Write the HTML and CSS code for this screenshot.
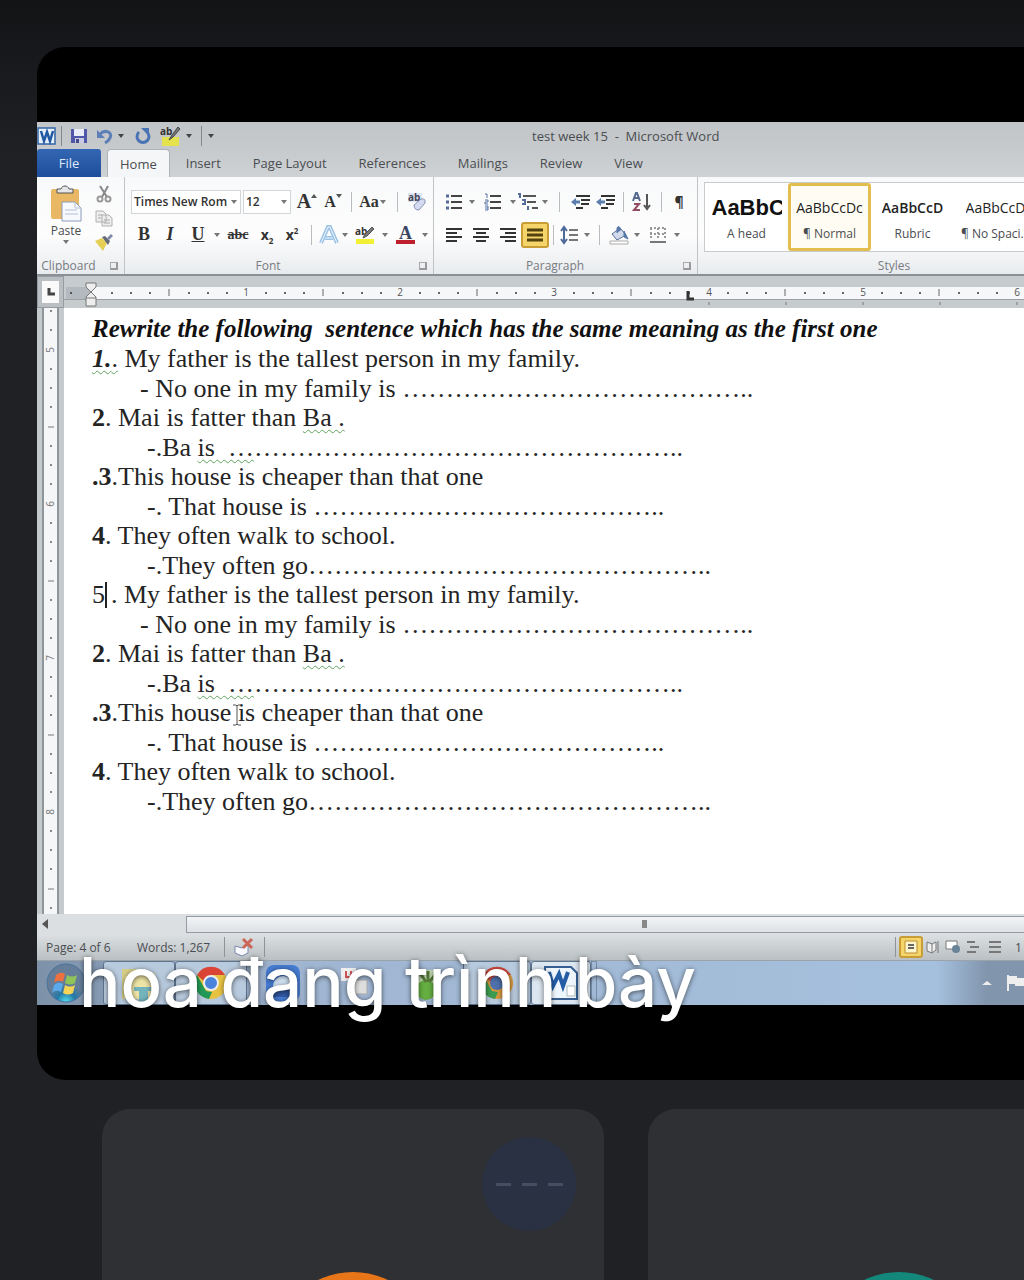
FILE: index.html
```html
<!DOCTYPE html>
<html lang="vi">
<head>
<meta charset="utf-8">
<meta name="viewport" content="width=device-width, initial-scale=1">
<title>test week 15 - Microsoft Word</title>
<link rel="stylesheet" href="styles.css">
</head>
<body>
<main class="call">
<section class="stage">
<div class="word">
<header class="titlebar">
  <svg class="w20" height="20" viewBox="0 0 20 20"><rect x="1" y="2" width="17" height="16" fill="#e8f0fa" stroke="#3265a5" stroke-width="1.5"/><path d="M4 5l3 10 3-9 3 9 3-10" fill="none" stroke="#2159a3" stroke-width="2.5"/></svg>
  <i class="sep w8"></i>
  <button class="tool w28" aria-label="Save"><svg width="18" height="18" viewBox="0 0 18 18"><path d="M1 2h16v14H1z" fill="#5057a8"/><path d="M4 2h10v7H4z" fill="#e8ecf9"/><path d="M5 11h9v5H5z" fill="#c8cbe2"/><path d="M6 12h3v4H6z" fill="#454a89"/></svg></button>
  <button class="tool w24" aria-label="Undo"><svg width="18" height="18" viewBox="0 0 18 18"><path d="M4 7c5-5 13-2 10 4-1 2-3 4-5 5" fill="none" stroke="#5d7fb8" stroke-width="3"/><path d="M1 3v8h8z" fill="#5d7fb8"/></svg></button>
  <i class="caret w8"></i>
  <button class="tool w36" aria-label="Redo"><svg width="18" height="18" viewBox="0 0 18 18"><path d="M13 5a6 6 0 1 1-8 0" fill="none" stroke="#4a73b5" stroke-width="3"/><path d="M7 1h8v8z" fill="#4a73b5"/></svg></button>
  <button class="tool w20" aria-label="Highlight"><svg width="22" height="22" viewBox="0 0 22 22"><path d="M2 12h17v9H2z" fill="#e5e34d"/><text x="0" y="10" font-size="10" font-weight="700" fill="#333">ab</text><path d="M9 15l3-5 6-8 2 2-7 8z" fill="#777" stroke="#444"/></svg></button>
  <i class="caret w16"></i><i class="sep w8"></i><i class="caret customize w12"></i>
  <h1 class="title">test week 15 &nbsp;-&nbsp; Microsoft Word</h1>
</header>
<nav class="tabs">
  <button class="tab file">File</button><button class="tab home">Home</button><button class="tab">Insert</button><button class="tab">Page Layout</button><button class="tab">References</button><button class="tab">Mailings</button><button class="tab">Review</button><button class="tab">View</button>
</nav>
<div class="ribbon">
  <section class="group clipboard">
    <div class="clip">
      <button class="paste"><svg width="32" height="36" viewBox="0 0 32 36"><rect x="1" y="3" width="28" height="30" rx="2" fill="#e9b865"/><path d="M7 7V3h4c1-4 7-4 8 0h4v4z" fill="#e5e6e8" stroke="#555"/><path d="M12 16h13l6 6v13H12z" fill="#f7f9ff" stroke="#8c9ab9"/><path d="M25 16v6h6M15 24h12M15 28h13" fill="none" stroke="#b4bed5"/></svg>Paste<i class="caret"></i></button>
      <div class="cliptools">
        <button class="tool" aria-label="Cut"><svg width="18" height="18" viewBox="0 0 18 18"><path d="M5 1l7 11M13 1L7 12" stroke="#888" stroke-width="2"/><circle cx="5" cy="14" r="2.5" fill="none" stroke="#999" stroke-width="2"/><circle cx="13" cy="14" r="2.5" fill="none" stroke="#999" stroke-width="2"/></svg></button>
        <button class="tool" aria-label="Copy"><svg width="18" height="18" viewBox="0 0 18 18"><path d="M1 2h7l3 3v8H1zM7 6h7l3 3v8H7z" fill="#eee" stroke="#b0b0b0"/><path d="M3 6h4M3 9h3M9 11h6M9 14h6" stroke="#aaa"/></svg></button>
        <button class="tool" aria-label="Format Painter"><svg width="20" height="18" viewBox="0 0 20 18"><path d="M1 8l7-3 5 5-4 8z" fill="#e5cf55"/><path d="M8 4l3-1 5 5-2 4z" fill="#666a77"/><path d="M13 5l4-4 2 2-4 4z" fill="#8089aa"/></svg></button>
      </div>
    </div>
    <footer class="label">Clipboard<i class="launch"></i></footer>
  </section>
  <section class="group fontgroup">
    <div class="row">
      <label class="combo w110"><select aria-label="Font"><option>Times New Rom</option></select><i class="caret"></i></label>
      <label class="combo w48"><select aria-label="Font size"><option>12</option></select><i class="caret"></i></label>
      <button class="tool serif grow w32">A<i class="mark up"></i></button>
      <button class="tool serif shrink w20">A<i class="mark"></i></button>
      <i class="sep w16"></i><button class="tool serif case w20">Aa</button><i class="caret w8"></i><i class="sep w20"></i>
      <button class="tool w20" aria-label="Clear Formatting"><svg width="20" height="20" viewBox="0 0 20 20"><rect x="1" y="1" width="14" height="9" fill="#dce3f2"/><text x="1" y="9" font-size="10" fill="#445">ab</text><path d="M7 13l7-6q5-1 4 4l-6 7q-5 0-5-5z" fill="#d4daf0" stroke="#8791b5"/></svg></button>
    </div>
    <div class="row">
      <button class="tool serif bold w26">B</button><button class="tool serif italic w26">I</button><button class="tool serif under w30">U</button><i class="caret w8"></i><button class="tool serif strike w34">abc</button><button class="tool w24">x<sub>2</sub></button><button class="tool w26">x<sup>2</sup></button><i class="sep w12"></i>
      <button class="tool w24" aria-label="Text Effects"><svg width="20" height="20" viewBox="0 0 20 20"><path d="M2 18L9 2h2l7 16M6 13h8" fill="none" stroke="#9cc3e5" stroke-width="4"/><path d="M2 18L9 2h2l7 16M6 13h8" fill="none" stroke="#eef7ff" stroke-width="1"/></svg></button><i class="caret w8"></i>
      <button class="tool w32" aria-label="Text Highlight Color"><svg width="20" height="20" viewBox="0 0 20 20"><path d="M1 14h18v5H1z" fill="#f1f034"/><text x="0" y="10" font-size="10" font-weight="700" fill="#333">ab</text><path d="M8 13l2-4 7-7 2 2-7 7z" fill="#777" stroke="#555"/></svg></button><i class="caret w8"></i>
      <button class="tool w32" aria-label="Font Color"><svg width="20" height="20" viewBox="0 0 20 20"><path d="M1 15h19v4H1z" fill="#bd1f2d"/><text x="4" y="14" font-size="18" font-weight="700" font-family="Liberation Serif, serif" fill="#3a4565">A</text></svg></button><i class="caret w8"></i>
    </div>
    <footer class="label">Font<i class="launch"></i></footer>
  </section>
  <section class="group paragraph">
    <div class="row">
      <button class="tool w26" aria-label="Bullets"><svg width="18" height="18" viewBox="0 0 18 18"><path d="M6 3h11M6 9h11M6 15h11" stroke="#444" stroke-width="2"/><path d="M1 3h3M1 9h3M1 15h3" stroke="#556b99" stroke-width="3"/></svg></button><i class="caret w10"></i>
      <button class="tool w32" aria-label="Numbering"><svg width="18" height="18" viewBox="0 0 18 18"><path d="M6 3h11M6 9h11M6 15h11" stroke="#444" stroke-width="2"/><path d="M1 1h2v4M1 7h3v2H1v2h3M1 13h3v4H1M1 15h3" fill="none" stroke="#5873a4"/></svg></button><i class="caret w8"></i>
      <button class="tool w24" aria-label="Multilevel List"><svg width="24" height="18" viewBox="0 0 24 18"><path d="M6 3h13M10 9h9M15 15h6" stroke="#555" stroke-width="2"/><path d="M1 1h2v4M5 7h3v4H5M11 13v4" fill="none" stroke="#556b99" stroke-width="2"/></svg></button><i class="caret w8"></i><i class="sep w20"></i>
      <button class="tool w24" aria-label="Decrease Indent"><svg width="20" height="16" viewBox="0 0 20 16"><path d="M5 2h14M10 6h9M10 10h8M5 14h7" stroke="#333" stroke-width="2"/><path d="M9 8H3" stroke="#5c7eae" stroke-width="3"/><path d="M5 4v8L0 8z" fill="#5c7eae"/></svg></button>
      <button class="tool w26" aria-label="Increase Indent"><svg width="20" height="16" viewBox="0 0 20 16"><path d="M5 2h14M10 6h9M10 10h8M5 14h7" stroke="#333" stroke-width="2"/><path d="M9 8H3" stroke="#5c7eae" stroke-width="3"/><path d="M5 4v8L0 8z" fill="#5c7eae"/></svg></button><i class="sep w8"></i>
      <button class="tool w30" aria-label="Sort"><svg width="20" height="20" viewBox="0 0 20 20"><path d="M1 9l3-8h1l3 8M3 6h4" fill="none" stroke="#52688f" stroke-width="2"/><path d="M2 12h5l-5 6h6" fill="none" stroke="#934c66" stroke-width="2"/><path d="M15 2v13M12 13l3 4 3-4" fill="none" stroke="#555" stroke-width="2"/></svg></button><i class="sep w8"></i>
      <button class="tool pilcrow w28">¶</button>
    </div>
    <div class="row">
      <button class="tool w26" aria-label="Align Left"><svg width="18" height="16" viewBox="0 0 18 16"><path d="M1 2h16M1 6h11M1 10h16M1 14h11" stroke="#333" stroke-width="2"/></svg></button>
      <button class="tool w28" aria-label="Center"><svg width="18" height="16" viewBox="0 0 18 16"><path d="M1 2h16M4 6h10M1 10h16M4 14h10" stroke="#333" stroke-width="2"/></svg></button>
      <button class="tool w26" aria-label="Align Right"><svg width="18" height="16" viewBox="0 0 18 16"><path d="M1 2h16M6 6h11M1 10h16M6 14h11" stroke="#333" stroke-width="2"/></svg></button>
      <button class="tool on w28" aria-label="Justify"><svg width="18" height="16" viewBox="0 0 18 16"><path d="M1 3h16M1 8h16M1 13h16" stroke="#55430f" stroke-width="3"/></svg></button><i class="sep w8"></i>
      <button class="tool w26" aria-label="Line Spacing"><svg width="18" height="18" viewBox="0 0 18 18"><path d="M8 4h9M8 9h9M8 14h9" stroke="#777" stroke-width="2"/><path d="M3 2v14M0 5l3-4 3 4M0 13l3 4 3-4" fill="none" stroke="#4d6a99" stroke-width="2"/></svg></button><i class="caret w8"></i><i class="sep w16"></i>
      <button class="tool w24" aria-label="Shading"><svg width="20" height="20" viewBox="0 0 20 20"><path d="M3 9l8-6 6 7-9 5z" fill="#d0daeb" stroke="#546d99"/><path d="M8 8V3q2-4 4 2M15 6l4 8-4-2z" fill="#5878aa" stroke="#5878aa"/><path d="M1 16h18v3H1z" fill="#fff" stroke="#aaa"/></svg></button><i class="caret w12"></i>
      <button class="tool w30" aria-label="Borders"><svg width="18" height="18" viewBox="0 0 18 18"><path d="M1 2h16M1 8h16M2 2v11M9 2v11M16 2v11" stroke="#999" stroke-width="2" stroke-dasharray="2 2"/><path d="M1 16h16" stroke="#777" stroke-width="2"/></svg></button><i class="caret w8"></i>
    </div>
    <footer class="label">Paragraph<i class="launch"></i></footer>
  </section>
  <section class="group styles">
    <div class="gallery">
      <button class="style head"><b>AaBbC</b><span>A head</span></button>
      <button class="style selected"><b>AaBbCcDc</b><span>¶ Normal</span></button>
      <button class="style rubric"><b>AaBbCcD</b><span>Rubric</span></button>
      <button class="style nospace"><b>AaBbCcD</b><span>¶ No Spaci...</span></button>
    </div>
    <footer class="label">Styles</footer>
  </section>
</div>
<div class="ruler">
  <button class="tabstop" aria-label="Tab selector"><svg width="10" height="10" viewBox="0 0 10 10"><path d="M3 1v6h6" fill="none" stroke="#444" stroke-width="3"/></svg></button>
  <svg class="scale" height="32">
    <defs><pattern id="inch" width="154" height="32" x="28" patternUnits="userSpaceOnUse"><path d="M19 17h2M38 17h2M57 17h2M96 17h2M115 17h2M134 17h2" stroke="#666" stroke-width="2"/><path d="M77 13v7" stroke="#666"/></pattern></defs>
    <rect width="100%" height="32" fill="#c6cbce"/><rect x="28" y="11" width="100%" height="12" fill="#f5f7f8"/><rect x="2" y="11" width="26" height="12" fill="#b3babf"/><rect y="23" width="100%" height="1" fill="#9aa0a4"/>
    <rect x="28" width="100%" height="32" fill="url(#inch)"/><path d="M6 17h2" stroke="#555" stroke-width="2"/>
    <g font-size="10" fill="#555" text-anchor="middle"><text x="182" y="20">1</text><text x="336" y="20">2</text><text x="490" y="20">3</text><text x="645" y="20">4</text><text x="799" y="20">5</text><text x="953" y="20">6</text></g>
    <path d="M22 7h10v4l-5 5 5 5v9H22v-9l5-5-5-5zM22 22h10" fill="#eee" stroke="#777"/><path d="M624 15v8h6" fill="none" stroke="#333" stroke-width="3"/>
    <path d="M645 26v3M722 26v3M799 26v3M876 26v3M953 26v3" stroke="#777"/>
  </svg>
</div>
<div class="body">
  <svg class="vruler" width="27"><defs><pattern id="vinch" width="27" height="154" y="42" patternUnits="userSpaceOnUse"><path d="M13 19h2M13 38h2M13 57h2M13 96h2M13 115h2M13 134h2" stroke="#888" stroke-width="2"/><path d="M11 77h6" stroke="#777"/></pattern></defs><rect width="27" height="100%" fill="#c5cacd"/><rect x="5" width="17" height="100%" fill="#8f969b"/><rect x="7" width="13" height="100%" fill="#f4f6f8"/><rect width="27" height="100%" fill="url(#vinch)"/><g font-size="10" fill="#777" text-anchor="middle"><text transform="translate(17 42) rotate(-90)">5</text><text transform="translate(17 196) rotate(-90)">6</text><text transform="translate(17 350) rotate(-90)">7</text><text transform="translate(17 504) rotate(-90)">8</text></g></svg>
  <article class="page">
    <h2>Rewrite the following&nbsp; sentence which has the same meaning as the first one</h2>
    <p><span class="gram"><b><em>1.</em></b>.</span> My father is the tallest person in my family.</p>
    <p class="answer dash">- No one in my family is …………………………………..</p>
    <p><b>2</b>. Mai is fatter than <span class="gram">Ba .</span></p>
    <p class="answer">-.Ba <span class="gram">is&nbsp; …</span>…………………………………………..</p>
    <p><b>.3</b>.This house is cheaper than that one</p>
    <p class="answer">-. That house is …………………………………..</p>
    <p><b>4</b>. They often walk to school.</p>
    <p class="answer">-.They often go………………………………………..</p>
    <p>5<i class="cursor"></i>. My father is the tallest person in my family.</p>
    <p class="answer dash">- No one in my family is …………………………………..</p>
    <p><b>2</b>. Mai is fatter than <span class="gram">Ba .</span></p>
    <p class="answer">-.Ba <span class="gram">is&nbsp; …</span>…………………………………………..</p>
    <p><b>.3</b>.This house<span class="mouse"><svg width="10" height="22" viewBox="0 0 10 22"><path d="M1 1h3l1 1 1-1h3M5 2v18M1 21h3l1-1 1 1h3" fill="none" stroke="#555"/></svg></span> is cheaper than that one</p>
    <p class="answer">-. That house is …………………………………..</p>
    <p><b>4</b>. They often walk to school.</p>
    <p class="answer">-.They often go………………………………………..</p>
  </article>
</div>
<div class="hscroll"><i class="arrow"></i><div class="thumb"><i></i></div></div>
<footer class="status">
  <span class="pages">Page: 4 of 6</span><span class="words">Words: 1,267</span><i class="sep w8"></i>
  <svg class="w32" height="20" viewBox="0 0 32 20"><path d="M7 9l7 2 6-3v8l-6 3-7-3z" fill="#f7f9ff" stroke="#7b88ad"/><path d="M15 2l9 9M24 2l-9 9" stroke="#cc6658" stroke-width="3"/></svg><i class="sep w8"></i>
  <div class="views"><i class="sep w8"></i>
    <button class="tool on w24" aria-label="Print Layout"><svg width="14" height="14" viewBox="0 0 14 14"><path d="M1 1h12v12H1z" fill="#fff6cb" stroke="#b88e35"/><path d="M4 5h6M4 8h6" stroke="#666" stroke-width="2"/></svg></button>
    <button class="tool w20" aria-label="Full Screen Reading"><svg width="14" height="14" viewBox="0 0 14 14"><path d="M1 2l5 2v9l-5-2zM6 4l4-2v8l-4 3M12 1v12" fill="#eee" stroke="#777"/></svg></button>
    <button class="tool w20" aria-label="Web Layout"><svg width="16" height="14" viewBox="0 0 16 14"><path d="M1 1h11v8H1z" fill="#fff" stroke="#777"/><circle cx="11" cy="9" r="4" fill="#698399"/></svg></button>
    <button class="tool w20" aria-label="Outline"><svg width="14" height="14" viewBox="0 0 14 14"><path d="M1 2h8M4 7h9M1 12h9" stroke="#777" stroke-width="2"/></svg></button>
    <button class="tool w24" aria-label="Draft"><svg width="14" height="14" viewBox="0 0 14 14"><path d="M1 2h12M1 7h12M1 12h12" stroke="#777" stroke-width="2"/></svg></button>
    <span class="zoomlevel">1</span></div>
</footer>
<div class="taskbar">
  <button class="app start" aria-label="Start"><svg width="40" height="42" viewBox="0 0 40 42"><defs><radialGradient id="orb" cy="1"><stop stop-color="#53e3f3"/><stop offset=".5" stop-color="#2479a8"/><stop offset="1" stop-color="#657d98"/></radialGradient></defs><circle cx="20" cy="21" r="19" fill="url(#orb)" stroke="#46739a"/><path d="M10 13q5-4 9-1l-2 8q-5-3-9 1z" fill="#ed713e"/><path d="M21 13q5 3 10 0l-2 8q-5 3-10 0z" fill="#90c45b"/><path d="M8 23q5-4 9-1l-2 8q-5-3-9 1z" fill="#5ba9e8"/><path d="M19 23q5 3 10 0l-2 8q-5 3-10 0z" fill="#f4d456"/></svg></button>
  <button class="app open" aria-label="Explorer"><svg width="40" height="40" viewBox="0 0 40 40"><path d="M3 6h14l4 4h15v26H3z" fill="#d7cd88"/><path d="M6 13h29l-2 23H5z" fill="#eee4a5"/><path d="M15 24h17v4h-3v10h-9V28h-5z" fill="#74b4bd"/></svg></button>
  <button class="app open" aria-label="Chrome"><svg width="34" height="36" viewBox="0 0 34 36"><circle cx="17" cy="18" r="16" fill="#e8c342"/><path d="M3 10a16 16 0 0 1 28 0H17l-5 8z" fill="#db4337"/><path d="M3 10l9 16 6 1-3 7A16 16 0 0 1 3 10" fill="#239957"/><circle cx="17" cy="18" r="7" fill="#4a83dc" stroke="#eee" stroke-width="2"/></svg></button>
  <button class="app" aria-label="Zoom"><svg width="36" height="38" viewBox="0 0 36 38"><rect x="1" y="1" width="34" height="36" rx="8" fill="#457bd0"/><circle cx="18" cy="22" r="10" fill="#d2e4f5"/><path d="M8 24h20v9H8z" fill="#3058a2"/></svg></button>
  <button class="app" aria-label="Unikey"><svg width="34" height="36" viewBox="0 0 34 36"><rect x="3" y="3" width="15" height="13" fill="#eee"/><path d="M8 6v6h5V6" fill="none" stroke="#d15456" stroke-width="2"/><rect x="15" y="15" width="14" height="14" fill="#ddd" stroke="#aaa"/></svg></button>
  <button class="app" aria-label="Cốc Cốc"><svg width="34" height="36" viewBox="0 0 34 36"><path d="M7 5h22v28H7z" fill="#c6dcb4"/><circle cx="16" cy="25" r="10" fill="#65ae42"/><path d="M10 8l6 9M18 6v11M26 9l-7 8" stroke="#567b39" stroke-width="3"/></svg></button>
  <button class="app open meeting" aria-label="Chrome meeting"><svg width="34" height="36" viewBox="0 0 34 36"><circle cx="17" cy="18" r="16" fill="#d9983f"/><path d="M3 10a16 16 0 0 1 28 0H17l-5 8z" fill="#d24b42"/><path d="M3 10l9 16 6 1-3 7A16 16 0 0 1 3 10" fill="#3b9b51"/><circle cx="17" cy="18" r="7" fill="#4e70ab"/></svg></button>
  <button class="app open active" aria-label="Word"><svg width="36" height="36" viewBox="0 0 36 36"><path d="M2 2h26l6 6v26H2z" fill="#eef5fc" stroke="#365e92" stroke-width="2"/><path d="M6 7l4 14 6-12 4 12 5-14" fill="none" stroke="#245da6" stroke-width="4"/><path d="M24 21h8v10h-8z" fill="#fff" stroke="#abb"/></svg></button>
  <i class="stack"></i>
  <div class="tray"><svg width="10" height="8" viewBox="0 0 10 8"><path d="M0 6l5-4 5 4z" fill="#eee"/></svg><svg width="28" height="18" viewBox="0 0 28 18"><path d="M2 1v16" stroke="#eee" stroke-width="2"/><path d="M3 2h8v2h7v8H9v-2H3z" fill="#eee"/></svg></div>
</div>
</div>
<p class="caption">hoa đang trình bày</p>
</section>
<section class="tiles">
  <article class="tile"><button class="more" aria-label="More options"><i></i><i></i><i></i></button><div class="avatar orange"></div></article>
  <article class="tile"><div class="avatar teal"></div></article>
</section>
</main>
</body>
</html>
```
FILE: styles.css
```css
* { box-sizing: border-box; }
body { margin: 0; background: linear-gradient(#121416, #202125 160px); font-family: "Open Sans", "Noto Sans", sans-serif; font-size: 12px; color: #4a4d51; overflow: hidden; }
button { border: 0; padding: 0; background: none; font: inherit; color: inherit; }
svg { display: block; flex: none; overflow: visible; }
h1, h2, p { margin: 0; }
.call { height: 100vh; overflow: hidden; padding: 47px 0 0 37px; }
.stage { position: relative; background: #000; border-radius: 28px 0 0 28px; padding: 75px 0; overflow: hidden; }
.word { display: flex; flex-direction: column; background: #c7cbce; overflow: hidden; }

.w8 { width: 8px; } .w10 { width: 10px; } .w12 { width: 12px; } .w16 { width: 16px; }
.w20 { width: 20px; } .w24 { width: 24px; } .w26 { width: 26px; } .w28 { width: 28px; }
.w30 { width: 30px; } .w32 { width: 32px; } .w34 { width: 34px; } .w36 { width: 36px; }
.w48 { width: 48px; } .w110 { width: 110px; }
.tool { display: flex; flex: none; align-items: center; justify-content: center; height: 26px; }
.tool.on { background: #f5d569; border: 2px solid #c99d35; border-radius: 3px; }
.sep, .caret { display: flex; flex: none; align-items: center; justify-content: center; }
.sep::before { content: ""; width: 1px; height: 20px; background: #b9bcc0; }
.caret::before { content: ""; border: 3px solid transparent; border-top: 4px solid #777; border-bottom: 0; }

.titlebar { display: flex; align-items: center; height: 27px; background: linear-gradient(#c2c5c8, #c6cacc); }
.titlebar .sep::before { background: #888; }
.titlebar .caret::before { border-top-color: #444; }
.title { font-size: 13px; font-weight: 400; margin-left: 315px; white-space: nowrap; }
.tabs { display: flex; height: 28px; background: linear-gradient(#c6cacc, #ced2d4); font-size: 13px; }
.tab { padding: 0 16px; white-space: nowrap; }
.file { width: 64px; margin-right: 6px; background: linear-gradient(#3467b3, #1d4d9b); color: #dfe9fa; border-radius: 3px 3px 0 0; }
.home { padding: 0 12px; background: #f5f6f7; border: 1px solid #aeb3b6; border-bottom: 0; border-radius: 4px 4px 0 0; }

.ribbon { display: flex; height: 99px; background: linear-gradient(#f8f9fa, #fdfdfd 60%, #e8ebee); border-bottom: 2px solid #8b9095; }
.group { display: flex; flex-direction: column; flex: none; border-right: 1px solid #c0c4c8; padding-top: 8px; }
.clipboard { width: 88px; padding-top: 5px; }
.fontgroup { width: 309px; padding-left: 6px; }
.paragraph { width: 264px; padding-left: 7px; }
.styles { flex: 1; min-width: 0; padding: 5px 0 0 6px; border: 0; }
.row { display: flex; align-items: center; height: 33px; }
.label { display: flex; align-items: center; justify-content: center; position: relative; margin-top: auto; height: 18px; color: #777c82; }
.launch { position: absolute; right: 6px; top: 6px; width: 8px; height: 8px; border: 1px solid #aaa; border-right: 2px solid #999; border-bottom: 2px solid #999; }
.fontgroup .label, .paragraph .label { padding-right: 28px; }
.clipboard .label { padding-right: 24px; }
.styles .label { padding-left: 60px; }
.clip { display: flex; }
.paste { width: 58px; display: flex; flex-direction: column; align-items: center; line-height: 18px; padding-top: 4px; }
.cliptools { display: flex; flex-direction: column; width: 18px; }
.cliptools .tool { height: 24px; }
.combo { display: grid; align-items: center; height: 24px; border: 1px solid #d3d6d9; background: #fff; }
.combo + .combo { margin-left: 2px; }
.combo > * { grid-area: 1 / 1; }
.combo select { appearance: none; border: 0; background: none; padding: 0 2px; width: 100%; font: inherit; font-weight: 600; color: #333; }
.combo .caret { justify-self: end; margin-right: 3px; }
.serif { font-family: "Liberation Serif", serif; font-weight: 700; color: #333; }
.row .tool { color: #333; }
.row .tool:not(.serif) { font-weight: 700; font-size: 14px; }
.tool sup, .tool sub { font-size: 8px; line-height: 10px; }
.tool sup { align-self: flex-start; padding-top: 4px; }
.tool sub { align-self: flex-end; padding-bottom: 2px; }
.mark { align-self: flex-start; margin-top: 5px; border: 3px solid transparent; border-top: 4px solid #555; border-bottom: 0; }
.mark.up { border-top: 0; border-bottom: 4px solid #555; }
.grow { font-size: 20px; } .shrink { font-size: 16px; } .case { font-size: 16px; }
.bold, .italic, .under { font-size: 18px; }
.italic { font-style: italic; } .under { text-decoration: underline; }
.strike { font-size: 14px; text-decoration: line-through; }
.row .pilcrow { font-size: 18px; }
.gallery { display: flex; height: 70px; overflow: hidden; background: #fff; border: 1px solid #c8cbce; border-right: 0; }
.style { display: flex; flex-direction: column; flex: none; width: 83px; align-items: center; justify-content: center; gap: 4px; overflow: hidden; white-space: nowrap; padding-top: 6px; }
.style b { font: 14px/24px "Open Sans", sans-serif; color: #222; max-width: 70px; overflow: hidden; }
.style span { line-height: 20px; }
.head b { font: 700 22px/24px "Liberation Sans", sans-serif; color: #111; }
.rubric b { font-weight: 600; }
.selected { border: 3px solid #e3bd4e; border-radius: 3px; background: #fffdf3; }

.ruler { display: flex; height: 32px; background: #c6cbce; }
.tabstop { display: flex; align-items: center; justify-content: center; flex: none; width: 27px; border: 5px solid #b9bfc3; outline: 1px solid #969da2; outline-offset: -1px; background: #fafafa; }
.scale { flex: 1; min-width: 0; overflow: hidden; }
.body { display: flex; }
.vruler { height: auto; align-self: stretch; overflow: hidden; }
.page { flex: 1; min-width: 0; background: #fff; padding: 6px 0 98px 28px; font: 26px/30px "Liberation Serif", serif; color: #242424; white-space: nowrap; }
.page h2 { font-size: 25px; font-style: italic; line-height: 30px; color: #111; }
.page .answer { padding-left: 55px; line-height: 29px; }
.page .dash { padding-left: 48px; }
.gram { text-decoration: underline wavy #5fa45f 1px; text-underline-offset: 3px; }
.cursor { display: inline-block; width: 2px; height: 26px; margin-right: 4px; background: #222; vertical-align: -5px; }
.mouse { position: relative; }
.mouse svg { position: absolute; left: 1px; top: 6px; }

.hscroll { display: flex; align-items: center; height: 20px; padding: 1px 0; background: #dbdfe2; }
.arrow { border: 5px solid transparent; border-right: 6px solid #555; border-left: 0; margin-left: 5px; }
.thumb { flex: 1; height: 17px; margin-left: 138px; border: 1px solid #969ca1; border-right: 0; background: linear-gradient(#f2f4f6, #dde1e5); display: flex; align-items: center; }
.thumb i { width: 5px; height: 8px; background: #888; margin-left: 455px; }
.status { display: flex; align-items: center; height: 27px; background: linear-gradient(#dce0e2, #bac0c3); border-bottom: 1px solid #9ba3aa; overflow: hidden; white-space: nowrap; }
.status .sep::before { background: #8d9397; }
.pages { width: 91px; padding-left: 9px; }
.words { width: 92px; padding-left: 9px; }
.views { flex: none; display: flex; align-items: center; width: 133px; margin-left: auto; overflow: hidden; }
.views .tool { height: 22px; }
.zoomlevel { padding-left: 8px; }
.taskbar { display: flex; align-items: center; height: 44px; background: linear-gradient(90deg, #7d91a9, #a0b5d1 260px, #a5c0dd 900px, #8195ad 950px); }
.app { display: flex; flex: none; align-items: center; justify-content: center; width: 72px; height: 44px; }
.start { width: 66px; padding-right: 8px; }
.open { background: #b8cadd; border: 1px solid #5e748f; border-radius: 3px; }
.meeting { width: 68px; }
.active { background: #dce6f0; width: 60px; }
.stack { width: 6px; height: 44px; border: 1px solid #778da6; }
.tray { display: flex; align-items: center; gap: 14px; margin-left: auto; width: 42px; overflow: hidden; }
.caption { position: absolute; left: 42px; top: 895px; font: 500 69px/80px Inter, sans-serif; color: #fff; white-space: nowrap; text-shadow: 0 1px 5px #0009; }

.tiles { display: flex; gap: 44px; padding: 29px 0 0 65px; }
.tile { position: relative; flex: none; width: 502px; height: 500px; border-radius: 28px; background: #2f3034; padding: 28px; display: flex; flex-direction: column; }
.more { display: flex; align-items: center; justify-content: center; gap: 11px; width: 94px; height: 94px; align-self: flex-end; border-radius: 50%; background: #2a3142; }
.more i { width: 15px; height: 3px; background: #454d60; }
.avatar { position: absolute; left: 50%; top: 163px; width: 160px; height: 160px; margin-left: -80px; border-radius: 50%; }
.orange { background: #e87517; }
.teal { background: #12877a; }
```
